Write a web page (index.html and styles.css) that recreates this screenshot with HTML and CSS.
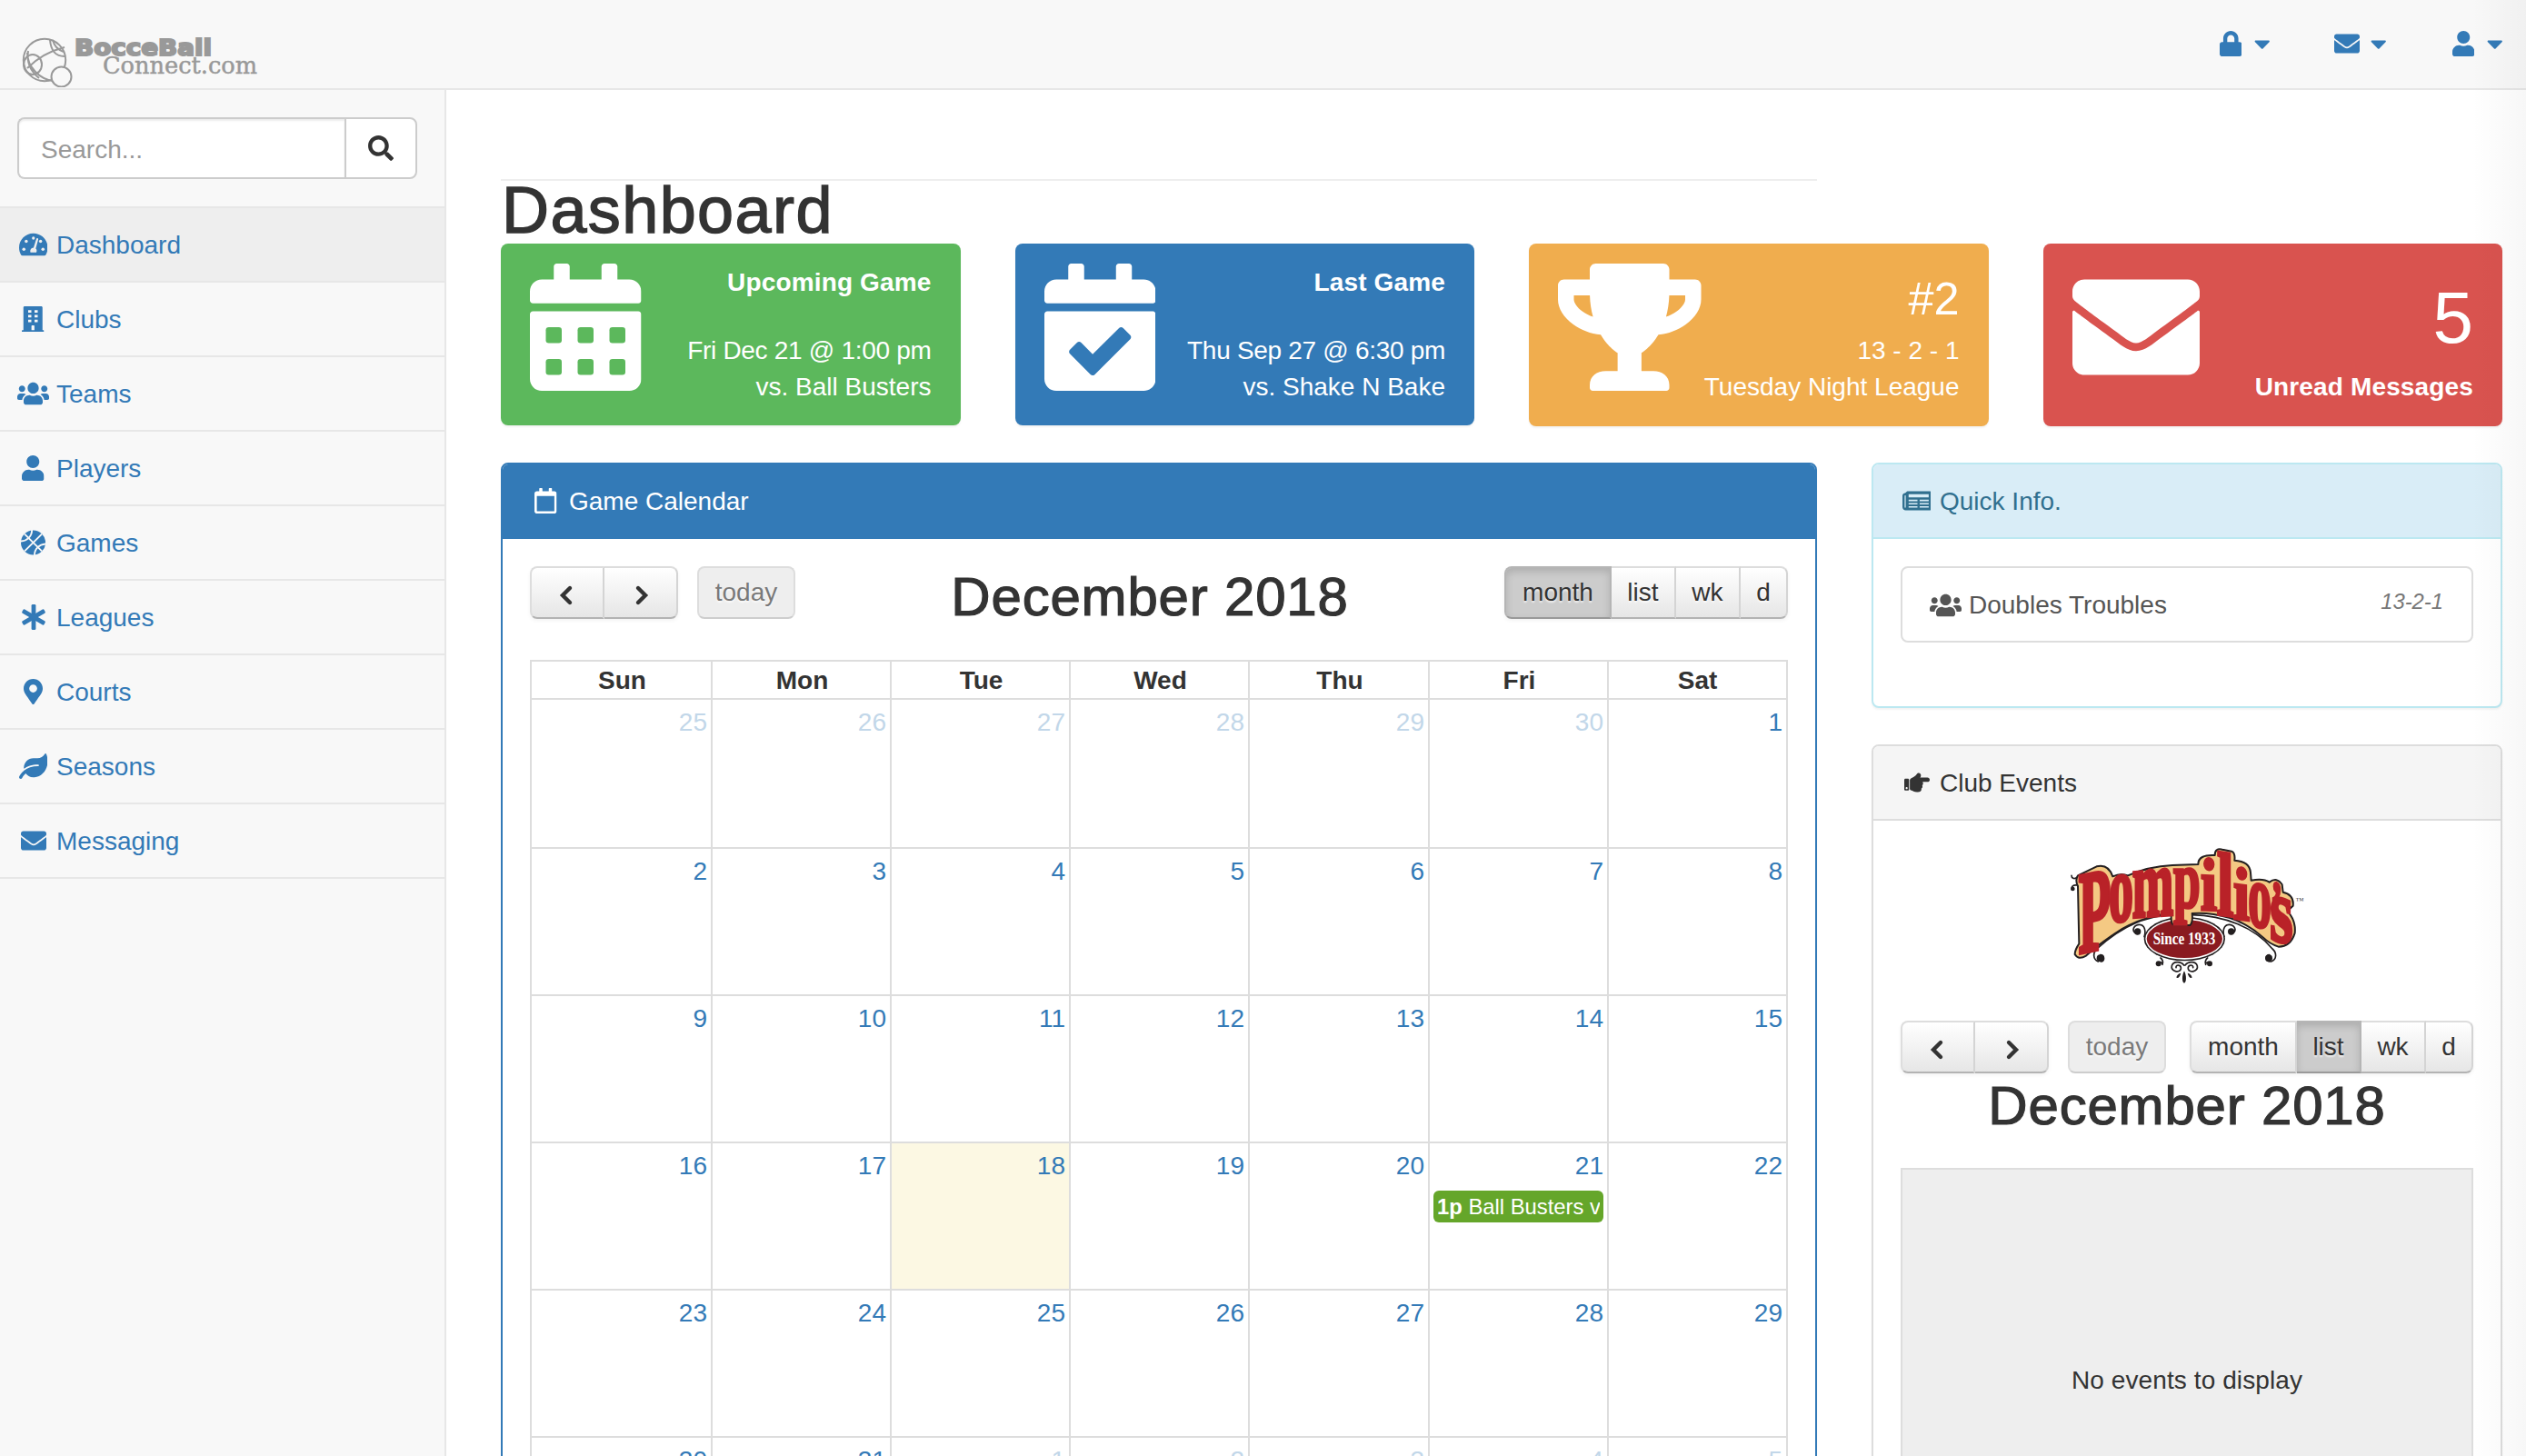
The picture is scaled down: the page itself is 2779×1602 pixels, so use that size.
FILE: index.html
```html
<!DOCTYPE html>
<html lang="en">
<head>
<meta charset="utf-8">
<title>Dashboard</title>
<link rel="stylesheet" href="styles.css">
</head>
<body>
<svg class="defs" aria-hidden="true">
  <symbol id="i-lock" viewBox="0 0 448 512"><path d="M400 224h-24v-72C376 68.200 307.800 0 224 0S72 68.200 72 152v72H48c-26.500 0-48 21.500-48 48v192c0 26.500 21.500 48 48 48h352c26.500 0 48-21.500 48-48V272c0-26.500-21.500-48-48-48zm-104 0H152v-72c0-39.700 32.300-72 72-72s72 32.300 72 72v72z"/></symbol>
  <symbol id="i-caret" viewBox="0 0 320 512"><path d="M31.300 192h257.300c17.800 0 26.700 21.500 14.100 34.100L174.100 354.800c-7.800 7.800-20.500 7.800-28.300 0L17.200 226.100C4.600 213.500 13.500 192 31.300 192z"/></symbol>
  <symbol id="i-mail" viewBox="0 0 512 512"><path d="M502.300 190.800c3.900-3.100 9.700-.2 9.700 4.700V400c0 26.500-21.500 48-48 48H48c-26.500 0-48-21.500-48-48V195.600c0-5 5.700-7.800 9.700-4.700 22.400 17.400 52.100 39.500 154.100 113.600 21.100 15.400 56.700 47.800 92.200 47.600 35.700.3 72-32.800 92.300-47.600 102-74.100 131.600-96.300 154-113.700zM256 320c23.200.4 56.600-29.200 73.400-41.400 132.700-96.300 142.800-104.700 173.400-128.700 5.800-4.500 9.200-11.500 9.200-18.900v-19c0-26.500-21.500-48-48-48H48c-26.500 0-48 21.500-48 48v19c0 7.400 3.400 14.300 9.200 18.900 30.600 23.900 40.700 32.400 173.400 128.700 16.800 12.200 50.200 41.800 73.400 41.400z"/></symbol>
  <symbol id="i-user" viewBox="0 0 448 512"><path d="M224 256c70.700 0 128-57.300 128-128S294.700 0 224 0 96 57.300 96 128s57.300 128 128 128zm89.600 32h-16.700c-22.200 10.200-46.900 16-72.900 16s-50.600-5.800-72.900-16h-16.700C60.200 288 0 348.200 0 422.400V464c0 26.500 21.500 48 48 48h352c26.500 0 48-21.500 48-48v-41.600c0-74.200-60.200-134.400-134.400-134.400z"/></symbol>
  <symbol id="i-users" viewBox="0 0 640 512"><path d="M96 224c35.300 0 64-28.700 64-64s-28.700-64-64-64-64 28.700-64 64 28.700 64 64 64zm448 0c35.300 0 64-28.700 64-64s-28.700-64-64-64-64 28.700-64 64 28.700 64 64 64zm32 32h-64c-17.600 0-33.500 7.100-45.100 18.600 40.300 22.100 68.900 62 75.100 109.400h66c17.700 0 32-14.300 32-32v-32c0-35.300-28.700-64-64-64zm-256 0c61.900 0 112-50.100 112-112S381.900 32 320 32 208 82.100 208 144s50.100 112 112 112zm76.800 32h-8.300c-20.800 10-43.900 16-68.500 16s-47.600-6-68.500-16h-8.300C179.600 288 128 339.600 128 403.200V432c0 26.500 21.500 48 48 48h288c26.500 0 48-21.500 48-48v-28.800c0-63.600-51.600-115.200-115.200-115.200zm-223.700-13.400C161.500 263.100 145.600 256 128 256H64c-35.300 0-64 28.700-64 64v32c0 17.700 14.300 32 32 32h65.900c6.300-47.400 34.900-87.300 75.200-109.400z"/></symbol>
  <symbol id="i-search" viewBox="0 0 512 512"><path d="M505 442.700L405.300 343c-4.500-4.500-10.600-7-17-7H372c27.600-35.300 44-79.700 44-128C416 93.100 322.900 0 208 0S0 93.100 0 208s93.100 208 208 208c48.300 0 92.700-16.400 128-44v16.300c0 6.400 2.500 12.500 7 17l99.700 99.700c9.400 9.400 24.600 9.400 33.900 0l28.300-28.300c9.400-9.400 9.400-24.600.1-34zM208 336c-70.700 0-128-57.200-128-128 0-70.700 57.200-128 128-128 70.700 0 128 57.200 128 128 0 70.700-57.200 128-128 128z"/></symbol>
  <symbol id="i-gauge" viewBox="0 0 576 512"><path d="M288 32C129 32 0 161 0 320c0 52.800 14.300 102.300 39.100 144.800 5.600 9.600 16.300 15.200 27.400 15.200h443c11.100 0 21.800-5.600 27.400-15.200C561.800 422.300 576 372.800 576 320c0-159-129-288-288-288z"/><g fill="#eee"><circle cx="96" cy="352" r="32"/><circle cx="144" cy="192" r="32"/><circle cx="288" cy="128" r="30"/><circle cx="432" cy="192" r="32"/><circle cx="480" cy="352" r="32"/><path d="M370 128c12 4 18 14 15 26l-50 182c22 18 26 48 12 80H229c-14-45 10-88 62-94l57-180c3-11 12-17 22-14z"/></g></symbol>
  <symbol id="i-building" viewBox="0 0 448 512"><path fill-rule="evenodd" d="M436 480h-20V24c0-13-11-24-24-24H56C43 0 32 11 32 24v456H12c-7 0-12 5-12 12v20h448v-20c0-7-5-12-12-12zM128 76h64v52h-64zM256 76h64v52h-64zM128 172h64v52h-64zM256 172h64v52h-64zM128 268h64v52h-64zM256 268h64v52h-64zM194 396c0-7 5-12 12-12h36c7 0 12 5 12 12v84h-60z"/></symbol>
  <symbol id="i-ball" viewBox="0 0 496 512"><circle cx="248" cy="256" r="248"/><g class="seams"><path d="M75 83l346 346M421 83L75 429M222 0c0 130-92 224-232 230M274 512c0-130 92-224 232-230"/></g></symbol>
  <symbol id="i-star" viewBox="0 0 512 512"><rect x="212" y="0" width="88" height="512" rx="24"/><rect x="212" y="0" width="88" height="512" rx="24" transform="rotate(60 256 256)"/><rect x="212" y="0" width="88" height="512" rx="24" transform="rotate(120 256 256)"/></symbol>
  <symbol id="i-pin" viewBox="0 0 384 512"><path d="M172.300 501.700C27 291 0 269.400 0 192 0 86 86 0 192 0s192 86 192 192c0 77.400-27 99-172.300 309.700-9.500 13.700-29.900 13.700-39.400 0zM192 272c44.200 0 80-35.800 80-80s-35.800-80-80-80-80 35.800-80 80 35.800 80 80 80z"/></symbol>
  <symbol id="i-leaf" viewBox="0 0 576 512"><path d="M546.200 9.700c-5.600-12.500-21.600-13-28.300-1.200C486.900 62.400 431.400 96 368 96h-80C182 96 96 182 96 288c0 7 .8 13.700 1.500 20.500C161.300 262.800 253.400 224 384 224c8.800 0 16 7.200 16 16s-7.200 16-16 16C132.600 256 26 410.100 2.400 468c-6.600 16.300 1.200 34.900 17.500 41.600 16.400 6.800 35-1.100 41.800-17.300 1.500-3.600 20.900-47.900 71.900-90.600 32.400 43.900 94 85.800 174.900 77.200C465.500 467.500 576 326.700 576 154.300c0-50.200-10.800-102.200-29.800-144.600z"/></symbol>
  <symbol id="i-calendar" viewBox="0 0 448 512"><path fill-rule="evenodd" d="M400 64h-48V12c0-6.600-5.400-12-12-12h-40c-6.600 0-12 5.400-12 12v52H160V12c0-6.600-5.400-12-12-12h-40c-6.600 0-12 5.400-12 12v52H48C21.500 64 0 85.500 0 112v352c0 26.500 21.500 48 48 48h352c26.500 0 48-21.500 48-48V112c0-26.500-21.500-48-48-48zm-6 400H54c-3.300 0-6-2.700-6-6V160h352v298c0 3.300-2.700 6-6 6z"/></symbol>
  <symbol id="i-cal-body" viewBox="0 0 448 512"><path d="M436 160H12c-6.600 0-12-5.400-12-12v-36c0-26.500 21.500-48 48-48h48V12c0-6.600 5.400-12 12-12h40c6.600 0 12 5.400 12 12v52h128V12c0-6.600 5.400-12 12-12h40c6.600 0 12 5.400 12 12v52h48c26.500 0 48 21.500 48 48v36c0 6.600-5.400 12-12 12zM12 192h424c6.600 0 12 5.400 12 12v260c0 26.500-21.500 48-48 48H48c-26.500 0-48-21.500-48-48V204c0-6.600 5.400-12 12-12z"/></symbol>
  <symbol id="i-news" viewBox="0 0 576 512"><path fill-rule="evenodd" d="M552 64H112c-20 0-37 12-44 29l-30 10C16 109 0 128 0 150v234c0 35 29 64 64 64h488c13 0 24-11 24-24V88c0-13-11-24-24-24zM44 384V150l22-6v240c0 9-6 14-11 14s-11-5-11-14zM124 124h404v62H124zM124 232h178v34H124zM346 232h182v34H346zM124 302h178v28H124zM346 302h182v28H346zM124 366h178v28H124zM346 366h182v28H346z"/></symbol>
  <symbol id="i-hand" viewBox="0 0 512 512"><path d="M512 199.700c0 23.600-20.600 43.800-44.800 43.800h-99.900c16.400 17 18.400 49.800-6.200 70.900 14.300 22.800 2.100 53-16.500 62.300C353.600 425.900 322.700 448 272 448c-2.700 0-13.300-.2-16-.2-62 .2-76.900-31-123.700-38.300-11.700-1.800-20.300-11.900-20.300-23.700V214.300c0-18.400 10.600-35.900 28.500-43.900 28.900-13 95.400-49 107.500-77.300 7.800-18.200 21.400-29.100 40-29.100 34.200 0 57.800 35.100 44.100 66.900-3.600 8.400-8.300 16.700-14.100 24.900h149.200c23.400 0 44.800 20.600 44.800 43.900zM96 200v192c0 13.300-10.700 24-24 24H24c-13.300 0-24-10.700-24-24V200c0-13.300 10.700-24 24-24h48c13.300 0 24 10.700 24 24zM68 368c0-11-9-20-20-20s-20 9-20 20 9 20 20 20 20-9 20-20z"/></symbol>
</svg>

<header class="navbar">
  <a class="brand" href="#">
    <svg width="270" height="60" viewBox="0 0 270 60">
      <g fill="none" stroke="#999" stroke-width="2">
        <circle cx="29" cy="30" r="23.200"/>
        <path d="M10 39C22 27 35 20 51 16M35 8c1 12 7 18 16 18M38 8c2 8 6 11 12 13M10 22c0 16 14 29 28 31M11 20c-2 13 2 22 12 30"/>
        <ellipse cx="16" cy="35" rx="10" ry="11"/>
        <circle cx="47.500" cy="48.500" r="11" fill="#f8f8f8"/>
      </g>
      <g fill="#999">
        <text class="brand-top" x="62" y="24.500" textLength="151" lengthAdjust="spacingAndGlyphs">BocceBall</text>
        <text class="brand-bottom" x="93" y="45" textLength="170" lengthAdjust="spacingAndGlyphs">Connect.com</text>
      </g>
    </svg>
  </a>
  <nav class="toplinks">
    <a href="#"><span class="fw"><svg class="w14"><use href="#i-lock"/></svg></span><svg class="w10"><use href="#i-caret"/></svg></a>
    <a href="#"><span class="fw"><svg class="w16"><use href="#i-mail"/></svg></span><svg class="w10"><use href="#i-caret"/></svg></a>
    <a href="#"><span class="fw"><svg class="w14"><use href="#i-user"/></svg></span><svg class="w10"><use href="#i-caret"/></svg></a>
  </nav>
</header>

<div class="layout">
  <aside class="sidebar">
    <div class="search"><span class="field">Search...</span><button class="go"><svg class="w16"><use href="#i-search"/></svg></button></div>
    <a class="item active" href="#"><span class="fw"><svg class="w18"><use href="#i-gauge"/></svg></span>Dashboard</a>
    <a class="item" href="#"><span class="fw"><svg class="w14"><use href="#i-building"/></svg></span>Clubs</a>
    <a class="item" href="#"><span class="fw"><svg class="w20"><use href="#i-users"/></svg></span>Teams</a>
    <a class="item" href="#"><span class="fw"><svg class="w14"><use href="#i-user"/></svg></span>Players</a>
    <a class="item" href="#"><span class="fw"><svg class="w15"><use href="#i-ball"/></svg></span>Games</a>
    <a class="item" href="#"><span class="fw"><svg class="w16"><use href="#i-star"/></svg></span>Leagues</a>
    <a class="item" href="#"><span class="fw"><svg class="w12"><use href="#i-pin"/></svg></span>Courts</a>
    <a class="item" href="#"><span class="fw"><svg class="w18"><use href="#i-leaf"/></svg></span>Seasons</a>
    <a class="item" href="#"><span class="fw"><svg class="w16"><use href="#i-mail"/></svg></span>Messaging</a>
  </aside>

  <main class="main">
    <div class="rule"></div>
    <h1>Dashboard</h1>

    <section class="stats">
      <div class="stat green">
        <svg width="122.500" height="140" viewBox="0 0 448 512"><use href="#i-cal-body"/><g fill="#5cb85c"><rect x="64" y="256" width="64" height="64" rx="12"/><rect x="192" y="256" width="64" height="64" rx="12"/><rect x="320" y="256" width="64" height="64" rx="12"/><rect x="64" y="384" width="64" height="64" rx="12"/><rect x="192" y="384" width="64" height="64" rx="12"/><rect x="320" y="384" width="64" height="64" rx="12"/></g></svg>
        <div class="info"><b class="lead">Upcoming Game</b><span class="when">Fri Dec 21 @ 1:00 pm</span><span>vs. Ball Busters</span></div>
      </div>
      <div class="stat blue">
        <svg width="122.500" height="140" viewBox="0 0 448 512"><use href="#i-cal-body"/><path fill="#337ab7" d="M345.300 287.900l-28.200-28.400c-4.700-4.700-12.200-4.700-16.900 0L194.100 364.700l-46-46.400c-4.600-4.700-12.200-4.700-16.900 0l-28.400 28.100c-4.700 4.700-4.700 12.300-.1 17l82.600 83.200c4.700 4.700 12.300 4.700 17 .1l142.900-141.800c4.700-4.700 4.800-12.300.1-17z"/></svg>
        <div class="info"><b class="lead">Last Game</b><span class="when">Thu Sep 27 @ 6:30 pm</span><span>vs. Shake N Bake</span></div>
      </div>
      <div class="stat yellow">
        <svg width="157.500" height="140" viewBox="0 0 576 512"><path d="M552 64H448V24c0-13.300-10.700-24-24-24H152c-13.300 0-24 10.700-24 24v40H24C10.700 64 0 74.700 0 88v56c0 35.700 22.500 72.400 61.900 100.700 31.500 22.700 69.800 37.100 110 41.700C203.300 338.500 240 360 240 360v72h-48c-35.300 0-64 20.700-64 56v12c0 6.600 5.400 12 12 12h296c6.600 0 12-5.400 12-12v-12c0-35.300-28.700-56-64-56h-48v-72s36.700-21.500 68.100-73.600c40.300-4.600 78.600-19 110-41.700 39.300-28.300 61.900-65 61.900-100.700V88c0-13.300-10.700-24-24-24zM99.300 192.800C74.900 175.200 64 155.600 64 144v-16h64.200c1 32.600 5.800 61.200 12.800 86.200-15.100-5.200-29.200-12.400-41.700-21.400zM512 144c0 16.100-17.700 36.100-35.300 48.800-12.500 9-26.700 16.200-41.800 21.400 7-25 11.800-53.600 12.800-86.200H512v16z"/></svg>
        <div class="info"><span class="lead rank">#2</span><span>13 - 2 - 1</span><span>Tuesday Night League</span></div>
      </div>
      <div class="stat red">
        <svg width="140" height="140"><use href="#i-mail"/></svg>
        <div class="info"><span class="huge">5</span><b>Unread Messages</b></div>
      </div>
    </section>

    <div class="columns">
      <section class="panel primary">
        <h2 class="head"><span class="fw"><svg class="w14"><use href="#i-calendar"/></svg></span>Game Calendar</h2>
        <div class="body">
          <div class="toolbar">
            <div class="group">
              <div class="btns nav"><button><svg viewBox="0 0 16 24"><path d="M12 4L4 12l8 8"/></svg></button><button><svg viewBox="0 0 16 24"><path d="M4 4l8 8-8 8"/></svg></button></div>
              <div class="btns today"><button>today</button></div>
            </div>
            <h2 class="month">December 2018</h2>
            <div class="btns views"><button class="v-month on">month</button><button class="v-list">list</button><button class="v-wk">wk</button><button class="v-d">d</button></div>
          </div>
          <div class="calendar">
            <div class="days"><b>Sun</b><b>Mon</b><b>Tue</b><b>Wed</b><b>Thu</b><b>Fri</b><b>Sat</b></div>
            <div class="week"><i class="off">25</i><i class="off">26</i><i class="off">27</i><i class="off">28</i><i class="off">29</i><i class="off">30</i><i>1</i></div>
            <div class="week"><i>2</i><i>3</i><i>4</i><i>5</i><i>6</i><i>7</i><i>8</i></div>
            <div class="week"><i>9</i><i>10</i><i>11</i><i>12</i><i>13</i><i>14</i><i>15</i></div>
            <div class="week"><i>16</i><i>17</i><i class="now">18</i><i>19</i><i>20</i><i>21<a class="event" href="#"><span><b>1p</b> Ball Busters vs. Doubles Troubles</span></a></i><i>22</i></div>
            <div class="week"><i>23</i><i>24</i><i>25</i><i>26</i><i>27</i><i>28</i><i>29</i></div>
            <div class="week"><i>30</i><i>31</i><i class="off">1</i><i class="off">2</i><i class="off">3</i><i class="off">4</i><i class="off">5</i></div>
          </div>
        </div>
      </section>

      <div class="side">
        <section class="panel quick">
          <h2 class="head"><span class="fw"><svg class="w18"><use href="#i-news"/></svg></span>Quick Info.</h2>
          <div class="body">
            <a class="team" href="#"><span class="fw"><svg class="w20"><use href="#i-users"/></svg></span>Doubles Troubles<em>13-2-1</em></a>
          </div>
        </section>
        <section class="panel events">
          <h2 class="head"><span class="fw"><svg class="w16"><use href="#i-hand"/></svg></span>Club Events</h2>
          <div class="body">
            <svg class="club-logo" width="320" height="150" viewBox="18 99 960 450">
              <g fill="none" stroke="#231f20" stroke-width="5" stroke-linecap="round">
                <path d="M205 474c-18-8-18-30-4-42C290 350 370 322 448 320M212 452c14 0 16 20 2 22"/>
                <path d="M776 474c20-8 18-30 4-42C720 360 620 322 514 320M770 452c-14 0-14 20 2 22"/>
                <path d="M335 382c-20-4-18-26 4-30 20-2 24 22 18 40M643 382c20-4 18-26-4-30-20-2-24 22-18 40"/>
                <path d="M405 486c-10-8 8-16 12-4M417 484c4-8 0-18-6-22M572 486c10-8-8-16-12-4M560 484c-4-8 0-18 6-22"/>
                <path d="M462 494c-2-12 18-10 16 4-4 16-34 8-30-10 4-16 30-16 40-2M518 494c2-12-18-10-16 4 4 16 34 8 30-10-4-16-30-16-40-2"/>
                <path d="M135 196c-10 8-18 2-18-6M135 222c-12-2-20 4-16 14"/>
              </g>
              <g fill="#231f20">
                <circle cx="212" cy="463" r="12"/><circle cx="768" cy="463" r="12"/><circle cx="335" cy="375" r="11"/><circle cx="644" cy="375" r="11"/><circle cx="404" cy="481" r="9"/><circle cx="573" cy="481" r="9"/><circle cx="121" cy="234" r="7"/>
                <path d="M489 505c8 14 8 38 0 40-8-2-8-26 0-40zM478 512c-2 10-8 18-14 16-2-6 4-14 14-16zM500 512c2 10 8 18 14 16 2-6-4-14-14-16z"/>
              </g>
              <ellipse cx="490" cy="399" rx="134" ry="73" fill="#231f20"/>
              <ellipse cx="490" cy="399" rx="129" ry="68" fill="#fff"/>
              <ellipse cx="490" cy="399" rx="125" ry="63" fill="#8a1a20"/>
              <path fill="#f4c983" stroke="#231f20" stroke-width="6" stroke-linejoin="round" d="M128 450Q128 435 142 415L138 225Q128 205 138 190L200 160Q238 150 253 193Q280 180 303 190Q370 160 450 156L535 153Q535 120 590 123Q590 98 615 104L645 110Q658 115 655 140Q705 143 708 180L710 206Q750 198 770 212Q795 193 812 220L815 245Q852 253 848 290Q835 300 832 310Q858 340 854 380Q840 425 800 425Q770 415 750 395Q700 350 640 330Q570 310 515 315Q518 345 508 354L455 354Q445 350 446 325Q447 314 440 314Q330 330 255 385Q190 430 165 455Q140 470 128 450Z"/>
              <g class="wordmark">
                <text transform="translate(140 446) skewY(-12) scale(1.750 3.850)">P</text>
                <text transform="translate(240 345) skewY(-8) scale(1.620 3.150)">o</text>
                <text transform="translate(317 328) skewY(-4) scale(1.640 3.200)">m</text>
                <text transform="translate(453 295) scale(1.600 2.650)">p</text>
                <text transform="translate(543 302) skewY(3) scale(1.950 2.450)">i</text>
                <text transform="translate(597 317) skewY(8) scale(1.980 2.950)">l</text>
                <text transform="translate(651 331) skewY(8) scale(1.950 2.450)">i</text>
                <text transform="translate(700 352) skewY(10) scale(1.540 2.950)">o</text>
                <text transform="translate(774 350) skewY(10) scale(1.200 2.100)">’</text>
                <text transform="translate(772 400) skewY(12) scale(1.950 3)">s</text>
              </g>
              <text class="since" x="386" y="417" textLength="206" lengthAdjust="spacingAndGlyphs">Since 1933</text>
              <text class="tm" x="856" y="282">™</text>
            </svg>
            <div class="toolbar">
              <div class="group">
                <div class="btns nav"><button><svg viewBox="0 0 16 24"><path d="M12 4L4 12l8 8"/></svg></button><button><svg viewBox="0 0 16 24"><path d="M4 4l8 8-8 8"/></svg></button></div>
                <div class="btns today"><button>today</button></div>
              </div>
              <div class="btns views"><button class="v-month">month</button><button class="v-list on">list</button><button class="v-wk">wk</button><button class="v-d">d</button></div>
            </div>
            <h2 class="month">December 2018</h2>
            <div class="empty">No events to display</div>
          </div>
        </section>
      </div>
    </div>
  </main>
</div>
<div class="edge-shade"></div>
</body>
</html>
```
FILE: styles.css
```css
* { box-sizing: border-box; }
body {
  margin: 0;
  height: 1602px;
  overflow: hidden;
  position: relative;
  background: #fff;
  color: #333;
  font: 28px/40px "Liberation Sans", Arial, sans-serif;
}
a { color: #337ab7; text-decoration: none; }
button { font: inherit; color: inherit; border: 0; padding: 0; background: none; }
h1, h2 { margin: 0; font-weight: normal; }
svg { fill: currentColor; flex: none; }
.defs { position: absolute; width: 0; height: 0; }
.fw { width: 35px; margin-right: 8px; display: inline-flex; justify-content: center; flex: none; }
.fw svg, .toplinks svg, .go svg { height: 28px; }
.w10 { width: 17.5px; }
.w12 { width: 21px; }
.w14 { width: 24.5px; }
.w15 { width: 27.1px; }
.w16 { width: 28px; }
.w18 { width: 31.5px; }
.w20 { width: 35px; }
.seams { fill: none; stroke: #f8f8f8; stroke-width: 34; }

/* top bar */
.navbar {
  height: 99px;
  display: flex;
  justify-content: space-between;
  background: #f8f8f8;
  border-bottom: 2px solid #e7e7e7;
}
.brand { padding: 36px 0 0 20px; line-height: 0; }
.brand-top { font: bold 25px "DejaVu Sans", sans-serif; stroke: #999; stroke-width: 2px; }
.brand-bottom { font: 26px "DejaVu Serif", serif; stroke: #999; stroke-width: .5px; }
.toplinks { display: flex; gap: 67.5px; padding-right: 26px; height: 95px; align-items: center; }
.toplinks a { display: flex; align-items: center; }

.layout { display: flex; height: 1503px; }

/* sidebar */
.sidebar { width: 491px; background: #f8f8f8; border-right: 2px solid #e7e7e7; flex: none; }
.search { margin: 30px 30px 30px 19px; height: 68px; display: flex; }
.field {
  flex: 1;
  background: #fff;
  border: 2px solid #ccc;
  border-right: 0;
  border-radius: 8px 0 0 8px;
  box-shadow: inset 0 2px 2px rgba(0, 0, 0, .075);
  color: #999;
  padding: 14px 24px 10px;
}
.go { width: 80px; background: #fff; border: 2px solid #ccc; border-radius: 0 8px 8px 0; display: flex; align-items: center; justify-content: center; }
.item { display: flex; align-items: center; height: 82px; padding: 2px 19px 0; border-bottom: 2px solid #e7e7e7; }
.item .fw { margin-top: -2px; }
.item.active { height: 84px; background: #eee; border-top: 2px solid #e7e7e7; }

/* main area */
.main { flex: 1; padding: 98px 26px 0 60px; overflow: hidden; }
.rule { width: 1448px; height: 2px; background: #eee; }
h1 { height: 69px; padding-left: 1px; font-size: 72px; line-height: 65px; letter-spacing: 1.4px; -webkit-text-stroke: 1.4px #333; }

.stats { display: grid; grid-template-columns: repeat(4, 1fr); gap: 60px; height: 201px; margin-bottom: 40px; }
.stat { display: flex; justify-content: space-between; padding: 22px 32px; border-radius: 8px; color: #fff; box-shadow: 0 2px 2px rgba(0, 0, 0, .05); }
.green { background: #5cb85c; height: 200px; }
.blue { background: #337ab7; height: 200px; }
.yellow { background: #f0ad4e; }
.red { background: #d9534f; }
.info { display: flex; flex-direction: column; padding-top: 1px; text-align: right; white-space: nowrap; }
.info b { letter-spacing: .15px; }
.when { letter-spacing: -.3px; }
.lead { height: 75px; }
.rank { font-size: 50.4px; line-height: 76px; }
.huge { font-size: 80px; height: 115px; line-height: 118px; }

.columns { display: flex; gap: 60px; align-items: flex-start; }
.panel { background: #fff; border: 2px solid #ddd; border-radius: 8px; box-shadow: 0 2px 2px rgba(0, 0, 0, .05); overflow: hidden; }
.head { display: flex; align-items: center; height: 82px; padding: 1px 30px 0; font-size: 28px; border-bottom: 2px solid #ddd; }
.head .fw { margin-top: -1px; }
.body { padding: 30px; }
.primary { width: 1448px; border-color: #337ab7; }
.primary .head { background: #337ab7; border-color: #337ab7; color: #fff; }
.side { width: 694px; display: flex; flex-direction: column; gap: 40px; }
.quick { height: 270px; border-color: #bce8f1; }
.quick .head { background: #d9edf7; border-color: #bce8f1; color: #31708f; }
.events .head { background: #f5f5f5; }

/* calendar toolbar */
.toolbar { display: flex; justify-content: space-between; height: 58px; }
.group { display: flex; gap: 21px; }
.btns { display: flex; height: 58px; border-radius: 8px; box-shadow: 0 2px 4px rgba(0, 0, 0, .05); }
.btns button {
  display: flex;
  justify-content: center;
  align-items: center;
  background: linear-gradient(#fff, #e6e6e6);
  border: 2px solid;
  border-color: #ddd #d4d4d4 #b3b3b3 #ddd;
  border-left-width: 0;
  text-shadow: 0 2px 2px rgba(255, 255, 255, .75);
}
.btns button:first-child { border-left-width: 2px; border-radius: 8px 0 0 8px; }
.btns button:last-child { border-radius: 0 8px 8px 0; }
.nav button { width: 81px; }
.nav button:first-child { width: 82px; }
.nav svg { width: 16px; height: 24px; margin: 5px 2px 0 0; fill: none; stroke: #333; stroke-width: 4.4px; stroke-linecap: round; }
.nav button:last-child svg { margin: 5px 0 0 3px; }
.today { box-shadow: none; }
.today button, .today button:first-child { width: 108px; background: #e6e6e6; border-radius: 8px; opacity: .65; border-color: #ccc #ccc #b3b3b3; }
.btns .on { background: #ccc; border-color: #b5b5b5 #b5b5b5 #999; box-shadow: inset 0 4px 8px rgba(0, 0, 0, .15); }
.v-month { width: 118px; }
.v-list { width: 71px; }
.v-wk { width: 71px; }
.v-d { width: 52px; }
.month { font-size: 60px; line-height: 68px; text-align: center; white-space: nowrap; letter-spacing: .8px; -webkit-text-stroke: 1.2px #333; }

/* month grid */
.calendar { margin-top: 45px; border: 2px solid #ddd; }
.days, .week { display: grid; grid-template-columns: 199px 197px 197px 197px 198px 197px 1fr; }
.days { height: 40px; text-align: center; line-height: 42px; }
.days > *, .week > * { border-left: 2px solid #ddd; margin-left: -2px; }
.week { height: 162px; border-top: 2px solid #ddd; }
.days + .week { height: 164px; }
.week > i { font-style: normal; color: #337ab7; text-align: right; padding: 5px 6px 0 0; }
.week > :last-child { padding-right: 4px; }
.week > .off { color: #c2d7e9; }
.week > .now { background: #fcf8e3; }
.event { display: block; margin: 7px 0 0 4px; height: 35px; padding: 0 4px; border-radius: 6px; background: #65a62a; color: #fff; font-size: 23.8px; line-height: 35px; text-align: left; }
.event span { display: block; overflow: hidden; white-space: nowrap; }

.team { display: flex; align-items: center; height: 84px; padding: 1px 31px 0 30px; border: 2px solid #ddd; border-radius: 8px; color: #555; }
.team em { margin-left: auto; margin-top: -7px; font-size: 23.8px; color: #777; }

.club-logo { display: block; margin: 0 auto 40px; }
.wordmark { font: bold 100px "Liberation Serif", serif; fill: #b92228; stroke: #b92228; stroke-width: 4px; }
.since { font: bold 54px "Liberation Serif", serif; fill: #fff; }
.tm { font: 28px "Liberation Serif", serif; fill: #444; }
.events .month { height: 104px; line-height: 71px; }
.empty { height: 400px; padding-top: 212px; border: 2px solid #ddd; background: #eee; text-align: center; letter-spacing: .1px; }

/* soft shade on the right window edge */
.edge-shade { position: absolute; top: 0; right: 0; width: 60px; height: 100%; background: linear-gradient(90deg, rgba(0, 0, 0, 0), rgba(0, 0, 0, .03)); pointer-events: none; }
```
